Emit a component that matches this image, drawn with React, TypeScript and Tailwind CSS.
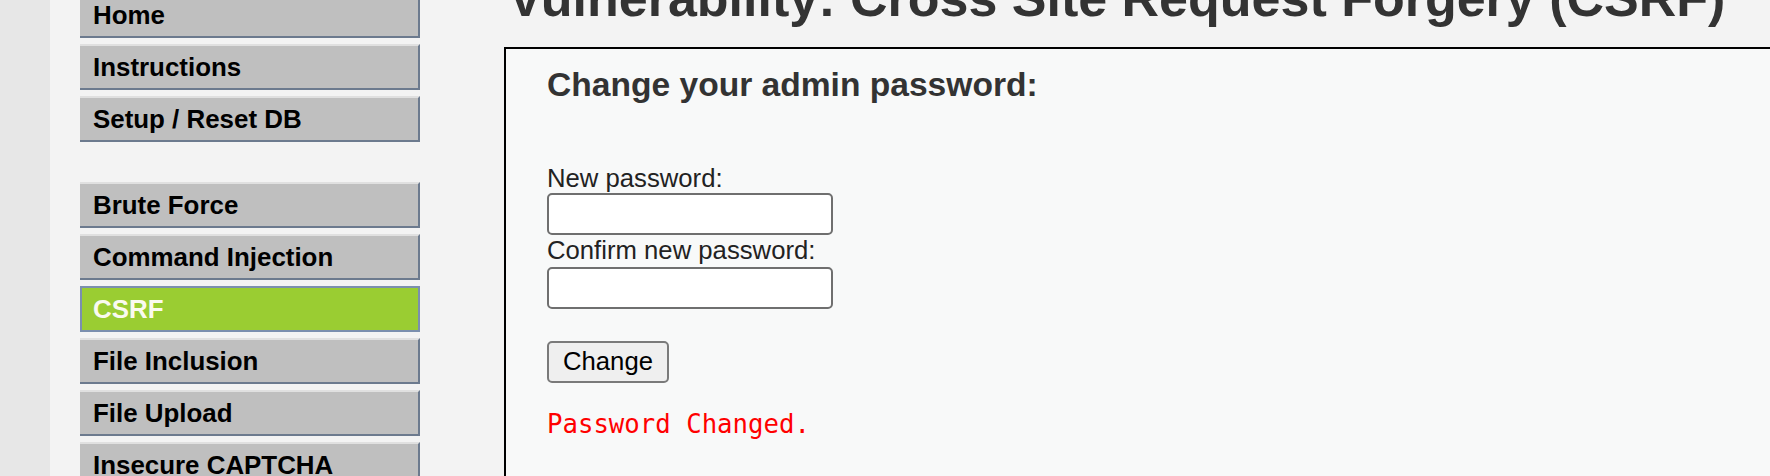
import React from 'react';

interface MenuItem {
  label: string;
  selected?: boolean;
}

const topMenu: MenuItem[] = [
  { label: 'Home' },
  { label: 'Instructions' },
  { label: 'Setup / Reset DB' },
];

const vulnMenu: MenuItem[] = [
  { label: 'Brute Force' },
  { label: 'Command Injection' },
  { label: 'CSRF', selected: true },
  { label: 'File Inclusion' },
  { label: 'File Upload' },
  { label: 'Insecure CAPTCHA' },
];

const MenuButton: React.FC<{ item: MenuItem }> = ({ item }) => {
  if (item.selected) {
    return (
      <div className="w-[340px] h-[46px] shrink-0 flex items-center pl-[11px] bg-[#9acd32] border-2 border-[#7b8fae] text-[#fafaf0] font-bold text-[25.9px]">
        {item.label}
      </div>
    );
  }
  return (
    <div className="w-[340px] h-[46px] shrink-0 flex items-center pl-[13px] bg-[#bfbfbf] border-t-2 border-t-[#e0e0e0] border-r-2 border-r-[#6c7a8e] border-b-2 border-b-[#6c7a8e] text-black font-bold text-[25.9px]">
      {item.label}
    </div>
  );
};

const App: React.FC = () => {
  return (
    <div
      className="flex w-full h-[476px] overflow-hidden bg-[#f3f3f3]"
      style={{ fontFamily: '"Liberation Sans", Arial, sans-serif' }}
    >
      {/* left strip */}
      <div className="w-[50px] shrink-0 bg-[#e7e7e7]" />

      {/* menu */}
      <div className="w-[454px] shrink-0 pl-[30px] -mt-[8px] flex flex-col">
        <div className="flex flex-col gap-[6px]">
          {topMenu.map((m) => (
            <MenuButton key={m.label} item={m} />
          ))}
        </div>
        <div className="flex flex-col gap-[6px] mt-[40px]">
          {vulnMenu.map((m) => (
            <MenuButton key={m.label} item={m} />
          ))}
        </div>
      </div>

      {/* main */}
      <div className="flex-1 min-w-0 flex flex-col">
        <h1 className="-mt-[28px] ml-[4px] h-[52px] text-[52px] leading-[52px] font-bold text-[#333] whitespace-nowrap">
          Vulnerability: Cross Site Request Forgery (CSRF)
        </h1>
        <div className="mt-[23px] flex-1 border-t-2 border-l-2 border-black bg-[#f8f9f9] pl-[41px] pt-[17px]">
          <h3 className="text-[33.6px] leading-[38.5px] font-bold text-[#333]">
            Change your admin password:
          </h3>
          <form className="mt-[58.5px] flex flex-col items-start text-[25.7px] text-[#222]" onSubmit={(e) => e.preventDefault()}>
            <div className="leading-[30px] h-[30px]">New password:</div>
            <input
              type="password"
              className="w-[286px] h-[42px] bg-white border-2 border-[#6f6f6f] rounded-[5px]"
            />
            <div className="leading-[31px] h-[32px]">Confirm new password:</div>
            <input
              type="password"
              className="w-[286px] h-[42px] bg-white border-2 border-[#6f6f6f] rounded-[5px]"
            />
            <button
              type="submit"
              className="mt-[32px] w-[122px] h-[42px] bg-[#efefef] border-2 border-[#7a7a7a] rounded-[5px] text-black text-[25.7px] leading-none"
            >
              Change
            </button>
          </form>
          <pre
            className="mt-[26px] text-[25.7px] leading-[30px] text-[#ff0000]"
            style={{ fontFamily: '"DejaVu Sans Mono", "Liberation Mono", monospace' }}
          >
            Password Changed.
          </pre>
        </div>
      </div>
    </div>
  );
};

export default App;
